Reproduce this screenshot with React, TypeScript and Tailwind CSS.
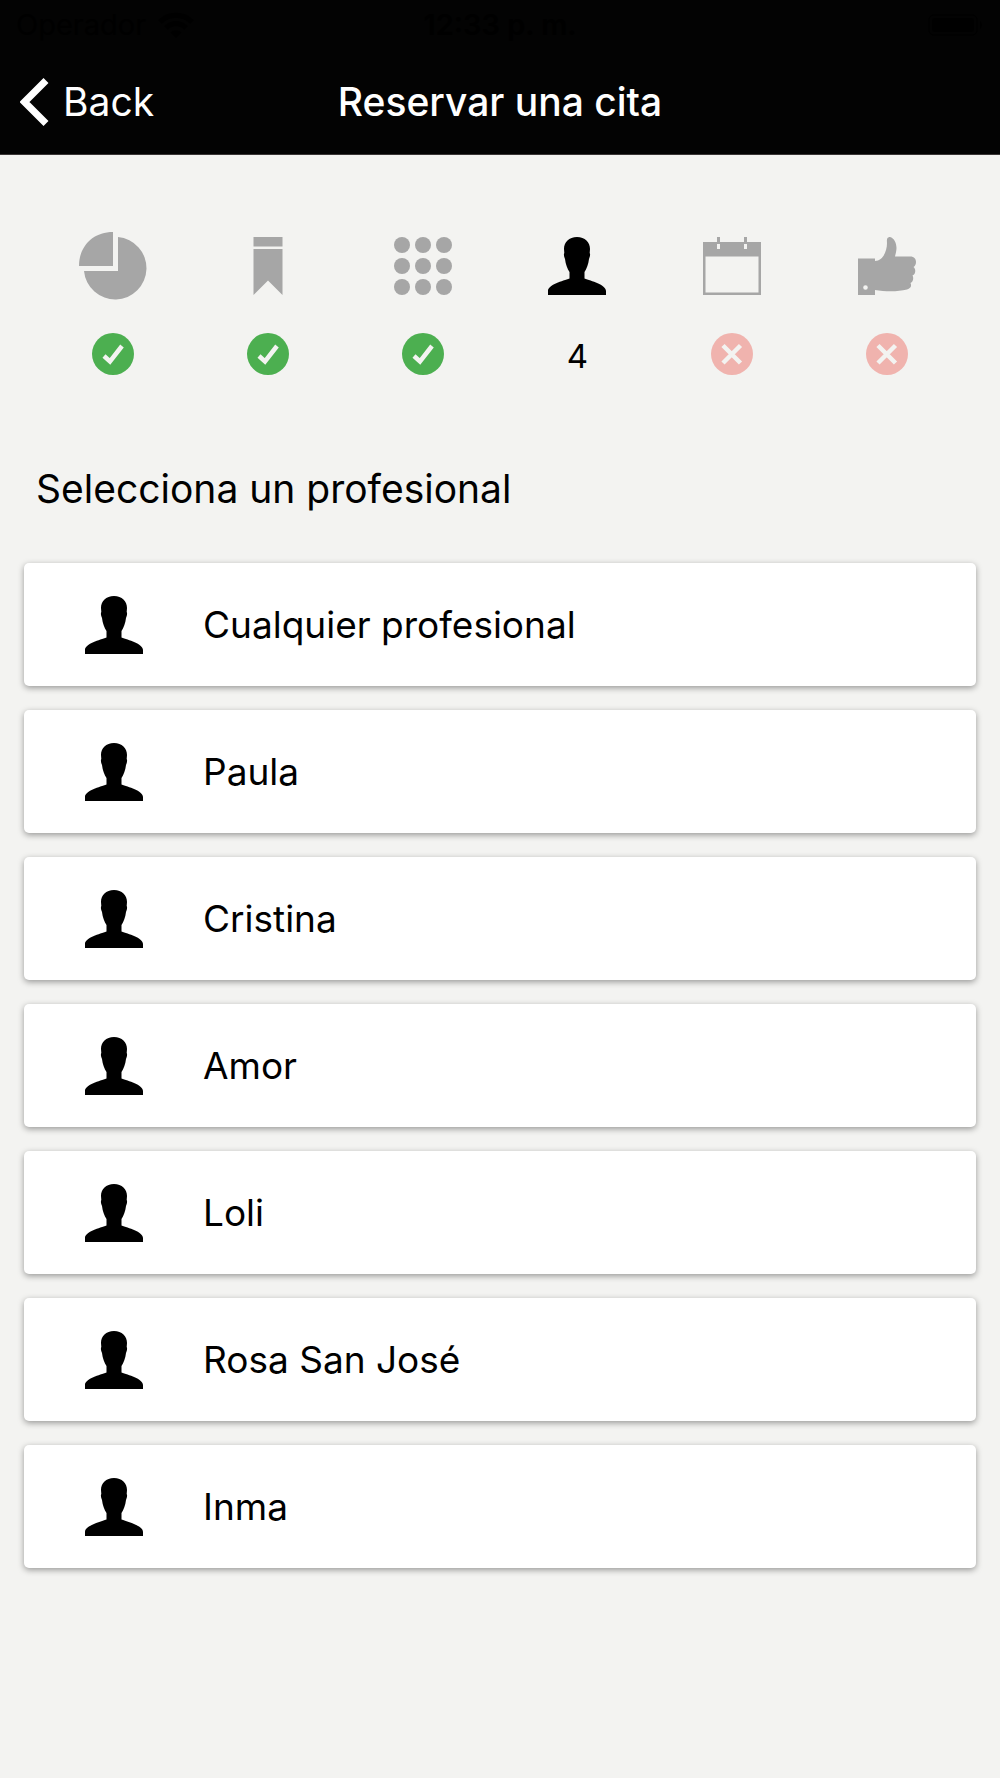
import type { ReactNode } from "react";

const professionals = ["Cualquier profesional", "Paula", "Cristina", "Amor", "Loli", "Rosa San José", "Inma"];

type StepState = "done" | "current" | "pending";

const steps: { label: string; icon: ReactNode; state: StepState }[] = [
  { label: "Categoría", icon: <PieIcon />, state: "done" },
  { label: "Servicio", icon: <BookmarkIcon />, state: "done" },
  { label: "Opciones", icon: <DotsIcon />, state: "done" },
  { label: "Profesional", icon: <PersonIcon />, state: "current" },
  { label: "Fecha", icon: <CalendarIcon />, state: "pending" },
  { label: "Confirmar", icon: <ThumbIcon />, state: "pending" },
];

export default function App() {
  return (
    <div className="min-h-screen bg-[#f3f3f1] text-black font-['Inter','Liberation_Sans',sans-serif]">
      <header className="bg-[#030303] border-b border-[#3a3636]">
        <StatusBar />
        <div className="grid grid-cols-[1fr_auto_1fr] items-center h-[104px] px-5 text-white">
          <button className="flex items-center gap-[14px] justify-self-start text-[39px] leading-[48px] cursor-pointer">
            <svg width="29" height="48" viewBox="0 0 29 48" aria-hidden="true">
              <path d="M26 2.500L4.500 24L26 45.500" fill="none" stroke="currentColor" strokeWidth="7" />
            </svg>
            Back
          </button>
          <h1 className="text-[39px] leading-[48px] font-medium">Reservar una cita</h1>
        </div>
      </header>

      <main>
        <ol className="grid grid-cols-6 px-9 pt-[76px]">
          {steps.map((step, i) => (
            <li
              key={step.label}
              aria-label={step.label}
              className={`flex flex-col items-center gap-8 ${step.state === "current" ? "text-black" : "text-[#a6a6a6]"}`}
            >
              <div className="h-[70px] flex items-center justify-center">{step.icon}</div>
              <div className="h-[42px] flex items-center justify-center">
                {step.state === "done" && <CheckBadge />}
                {step.state === "current" && <span className="pt-1 text-[33px] leading-[40px]">{i + 1}</span>}
                {step.state === "pending" && <CrossBadge />}
              </div>
            </li>
          ))}
        </ol>

        <h2 className="px-9 pt-[90px] text-[39px] leading-[48px]">Selecciona un profesional</h2>

        <ul className="flex flex-col gap-6 px-6 pt-[50px] pb-6">
          {professionals.map((name) => (
            <li key={name}>
              <button className="w-full h-[123px] flex items-center gap-[60px] pl-[61px] rounded-[5px] bg-white text-left text-[37px] leading-[48px] shadow-[0_2px_6px_rgba(0,0,0,0.38)] cursor-pointer">
                <PersonIcon />
                {name}
              </button>
            </li>
          ))}
        </ul>
      </main>
    </div>
  );
}

function StatusBar() {
  return (
    <div className="grid grid-cols-3 items-center h-[50px] px-4 text-[29px] leading-8 text-black">
      <div className="flex items-center gap-3">
        Operador
        <svg width="36" height="27" viewBox="0 0 36 27" fill="none" stroke="currentColor" strokeWidth="5" aria-hidden="true">
          <path d="M2 10C11 1 25 1 34 10M8 16C14 10 22 10 28 16" />
          <path d="M12.500 20.500Q18 16 23.500 20.500L18 26Z" fill="currentColor" stroke="none" />
        </svg>
      </div>
      <span className="text-center font-semibold">12:33 p. m.</span>
      <svg className="justify-self-end" width="56" height="22" viewBox="0 0 56 22" aria-hidden="true">
        <rect x="1" y="1" width="48" height="20" rx="5" fill="none" stroke="currentColor" strokeWidth="1" />
        <rect x="4" y="4" width="42" height="14" rx="3" fill="currentColor" />
        <path d="M52 7q4 4 0 8z" fill="currentColor" />
      </svg>
    </div>
  );
}

function PieIcon() {
  return (
    <svg width="68" height="68" viewBox="0 0 68 68" fill="currentColor" aria-hidden="true">
      <path d="M34 0V34H0C0 14 14 0 34 0Z" />
      <path d="M39 5A31.300 31.300 0 1 1 5 39H39Z" />
    </svg>
  );
}

function BookmarkIcon() {
  return (
    <svg width="58" height="58" viewBox="0 0 58 58" fill="currentColor" aria-hidden="true">
      <path d="M14.500 0h29v9.500h-29zM14.500 12h29v46L29 43.500 14.500 58z" />
    </svg>
  );
}

function DotsIcon() {
  const spots = [8, 29, 50];
  return (
    <svg width="58" height="58" viewBox="0 0 58 58" fill="currentColor" aria-hidden="true">
      {spots.map((y) => spots.map((x) => <circle key={`${x}-${y}`} cx={x} cy={y} r="8" />))}
    </svg>
  );
}

function PersonIcon() {
  return (
    <svg className="shrink-0" width="58" height="58" viewBox="0 0 58 58" fill="currentColor" aria-hidden="true">
      <path d="M29 0C21 0 16 5 16 12L16.300 16C15.500 17 16 20 17 22C17.500 27 19.500 32 21.500 35V41.500C15 44 0 47.500 0 54V58H58V54C58 47.500 43 44 36.500 41.500V35C38.500 32 40.500 27 41 22C42 20 42.500 17 41.700 16L42 12C42 5 37 0 29 0Z" />
    </svg>
  );
}

function CalendarIcon() {
  return (
    <svg width="58" height="58" viewBox="0 0 58 58" fill="currentColor" aria-hidden="true">
      <path
        fillRule="evenodd"
        d="M0 5H14V0H17V5H41V0H44V5H58V58H0ZM2.500 19.500V55.500H55.500V19.500ZM14 7V12H17V7ZM41 7V12H44V7Z"
      />
    </svg>
  );
}

function ThumbIcon() {
  return (
    <svg width="58" height="58" viewBox="0 0 58 58" fill="currentColor" aria-hidden="true">
      <path
        fillRule="evenodd"
        d="M0 21.500H17V24C25 24 29 14 29 6C28.500 1 30 0 32 0C36 1 38.500 6 38.500 11C38.500 14 37.500 17 37 19.500H52C56.500 19.500 58 22 58 25C58 27.500 57 29 55.500 30C58 32 58 37 54.500 38.500C56 41 55 45 52.500 46C54 49 52.500 51.500 49 52.500C39 55 27 54.500 17 53V58H0ZM7.500 48.200A2.300 2.300 0 1 0 7.500 52.800A2.300 2.300 0 1 0 7.500 48.200Z"
      />
    </svg>
  );
}

function CheckBadge() {
  return (
    <svg width="42" height="42" viewBox="0 0 42 42" role="img" aria-label="Completado">
      <circle cx="21" cy="21" r="21" fill="#4caf50" />
      <path d="M12 23L18 28.500L30 13" fill="none" stroke="#f3f3f1" strokeWidth="4.500" />
    </svg>
  );
}

function CrossBadge() {
  return (
    <svg width="42" height="42" viewBox="0 0 42 42" role="img" aria-label="Pendiente">
      <circle cx="21" cy="21" r="21" fill="#f0b3ae" />
      <path d="M12 12.500L29.500 30M29.500 12.500L12 30" fill="none" stroke="#f3f3f1" strokeWidth="4.500" />
    </svg>
  );
}
